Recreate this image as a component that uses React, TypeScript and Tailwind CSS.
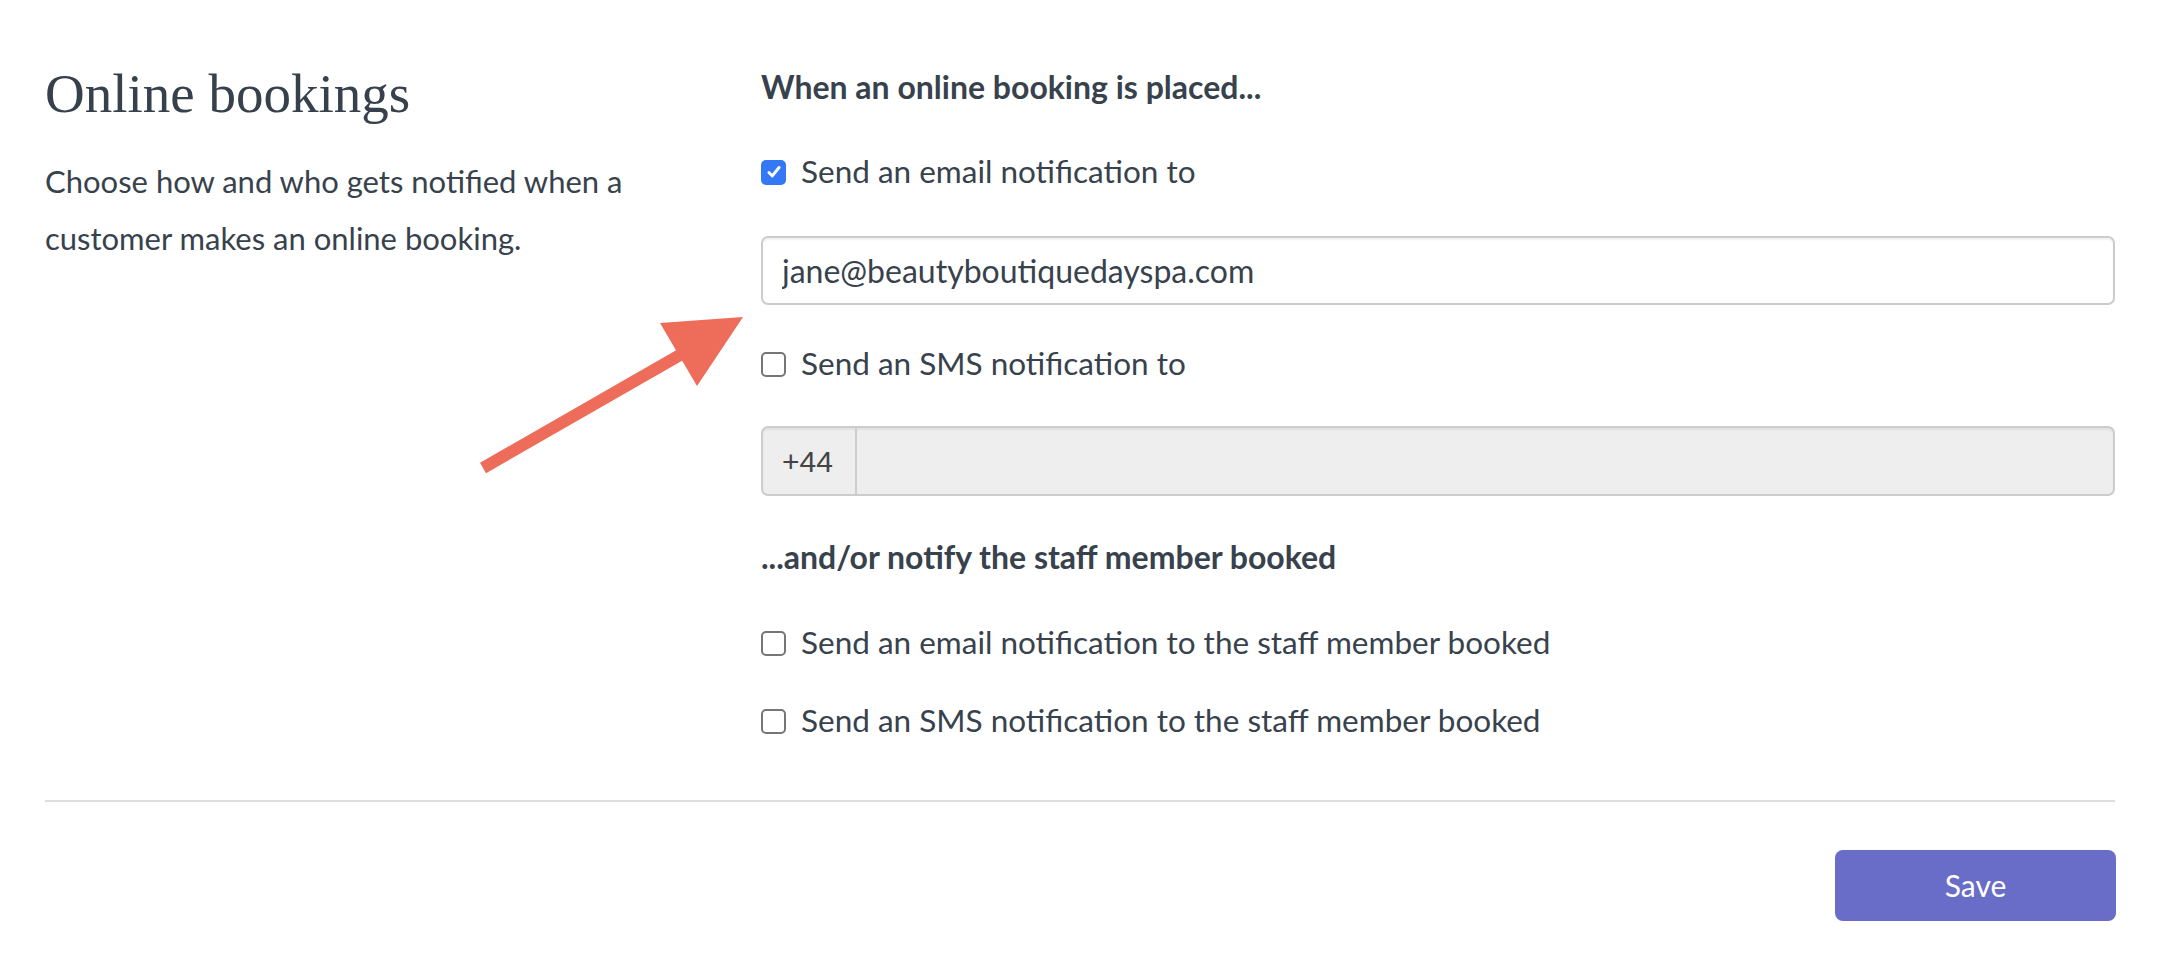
import { useState } from 'react';

function Check({ checked, onChange, label }: { checked: boolean; onChange: () => void; label: string }) {
  return (
    <label className="flex items-center h-[40px] cursor-pointer select-none" onClick={onChange}>
      {checked ? (
        <span className="w-[25px] h-[25px] rounded-[5px] bg-[#3478f6] flex items-center justify-center">
          <svg viewBox="0 0 16 16" className="w-[18px] h-[18px]" fill="none" stroke="white" strokeWidth={2.6} strokeLinecap="round" strokeLinejoin="round">
            <path d="M3.5 8.5l3 3 6-7.5" />
          </svg>
        </span>
      ) : (
        <span className="w-[25px] h-[25px] rounded-[5px] border-[2px] border-[#767676] bg-white" />
      )}
      <span className="ml-[15px] text-[31.5px] text-[#37424d]">{label}</span>
    </label>
  );
}

export default function App() {
  const [notifyEmail, setNotifyEmail] = useState(true);
  const [notifySms, setNotifySms] = useState(false);
  const [staffEmail, setStaffEmail] = useState(false);
  const [staffSms, setStaffSms] = useState(false);
  const [email, setEmail] = useState('jane@beautyboutiquedayspa.com');

  return (
    <div className="relative w-[2162px] h-[964px] bg-white font-['Lato',_sans-serif] text-[#37424d] overflow-hidden">
      <div className="px-[45px] grid grid-cols-[716px_1fr] pr-[47px]">
        <div className="pt-[62px]">
          <h2 className="font-['Liberation_Serif',_serif] text-[55px] leading-[64px] text-[#36414c]">Online bookings</h2>
          <p className="mt-[27px] max-w-[640px] text-[31px] leading-[57px]">
            Choose how and who gets notified when a customer makes an online booking.
          </p>
        </div>

        <div className="pt-[67px]">
          <h3 className="text-[32px] leading-[40px] font-bold">When an online booking is placed...</h3>

          <div className="mt-[45px]">
            <Check checked={notifyEmail} onChange={() => setNotifyEmail(!notifyEmail)} label="Send an email notification to" />
          </div>

          <input
            value={email}
            onChange={(e) => setEmail(e.target.value)}
            className="mt-[44px] block w-full h-[69px] px-[19px] text-[32px] text-[#37424d] border-[2px] border-[#cccccc] rounded-[7px] shadow-[inset_0_2px_2px_rgba(0,0,0,0.06)] outline-none"
          />

          <div className="mt-[39px]">
            <Check checked={notifySms} onChange={() => setNotifySms(!notifySms)} label="Send an SMS notification to" />
          </div>

          <div className="mt-[42px] flex h-[70px] border-[2px] border-[#cccccc] rounded-[7px] bg-[#eeeeee] shadow-[inset_0_2px_2px_rgba(0,0,0,0.06)] overflow-hidden">
            <span className="w-[94px] flex items-center pl-[19px] border-r-[2px] border-[#cccccc] font-['Liberation_Sans',_sans-serif] text-[30px] text-[#444]">+44</span>
            <input disabled className="flex-1 bg-transparent outline-none" />
          </div>

          <h3 className="mt-[41px] text-[32px] leading-[40px] font-bold">...and/or notify the staff member booked</h3>

          <div className="mt-[46px]">
            <Check checked={staffEmail} onChange={() => setStaffEmail(!staffEmail)} label="Send an email notification to the staff member booked" />
          </div>
          <div className="mt-[38px]">
            <Check checked={staffSms} onChange={() => setStaffSms(!staffSms)} label="Send an SMS notification to the staff member booked" />
          </div>
        </div>
      </div>

      <div className="mx-[45px] mr-[47px] mt-[59px] border-t-[2px] border-[#dddddd]" />

      <div className="flex justify-end pr-[46px] mt-[48px]">
        <button className="w-[281px] h-[71px] rounded-[8px] bg-[#6a6dc7] text-white text-[30px]">Save</button>
      </div>

      {/* annotation arrow */}
      <svg className="absolute left-0 top-0 pointer-events-none" width="2162" height="964">
        <line x1="483" y1="468" x2="680" y2="355" stroke="#ee6c5a" strokeWidth="12" />
        <polygon points="743,317 660,323 697,386" fill="#ee6c5a" />
      </svg>
    </div>
  );
}
